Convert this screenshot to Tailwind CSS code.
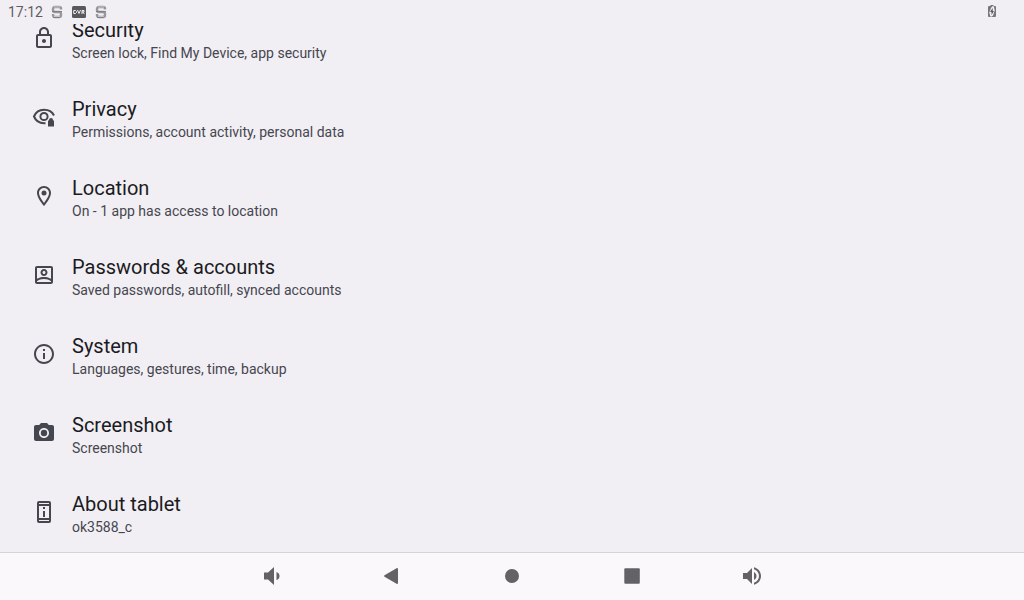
<!DOCTYPE html>
<html lang="en">
<head>
<meta charset="utf-8">
<meta name="viewport" content="width=device-width, initial-scale=1">
<title>Settings</title>
<script src="https://cdn.jsdelivr.net/npm/@tailwindcss/browser@4"></script>
</head>
<body class="flex h-screen flex-col overflow-hidden bg-[#f1eff4] font-[Roboto,sans-serif] text-[#1b1b1f]">
  <header class="flex h-6 shrink-0 items-center justify-between pl-2 pr-6 text-[#5f5e62]">
    <div class="flex items-center">
      <time class="w-9 text-sm leading-6">17:12</time>
      <svg class="ml-1 size-4.5" viewBox="0 0 18 18" fill="none" stroke="#98979c" aria-hidden="true"><path stroke-width="2.400" d="M13 6.500V5.500Q13 4 11 4H7Q5 4 5 6V7Q5 9 7 9H11Q13 9 13 11V12Q13 14 11 14H7Q5 14 5 12V11"/><path stroke="#807f84" stroke-width="1" d="M4 8.500H14M5 14.500H12"/><path stroke="#d0ced4" stroke-width=".8" d="M6 4H12M6 13.500H12"/></svg>
      <svg class="ml-1 size-4.5" viewBox="0 0 18 18" aria-hidden="true"><rect x="2" y="3" width="14" height="12" rx="1.500" fill="#59585c"/><path fill="none" stroke="#efedf2" stroke-width="1" d="M3.700 7.500V10.500H5.500L6.500 9.500V8.500L5.500 7.500ZM7.500 7L9 10.500L10.500 7M12 11V7.500H14V9H12M13 9L14.300 11"/></svg>
      <svg class="ml-1 size-4.5" viewBox="0 0 18 18" fill="none" stroke="#98979c" aria-hidden="true"><path stroke-width="2.400" d="M13 6.500V5.500Q13 4 11 4H7Q5 4 5 6V7Q5 9 7 9H11Q13 9 13 11V12Q13 14 11 14H7Q5 14 5 12V11"/><path stroke="#807f84" stroke-width="1" d="M4 8.500H14M5 14.500H12"/><path stroke="#d0ced4" stroke-width=".8" d="M6 4H12M6 13.500H12"/></svg>
    </div>
    <svg class="size-4" viewBox="0 0 16 16" role="img" aria-label="Battery charging"><path fill="#77767a" d="M6.500 1H9.500V2H11Q12 2 12 3V12Q12 13 11 13H5Q4 13 4 12V3Q4 2 5 2H6.500Z"/><path fill="#f1eff4" d="M8.300 2.300H9.800L10.700 6.500L9 11.500L7.800 12.600H6.300L5.300 8.500L7 4Z"/><path fill="#59585c" d="M8.700 4L6 8H7.500V11L10 7H8.700Z"/></svg>
  </header>

  <main class="flex min-h-0 flex-1 flex-col justify-end overflow-hidden">
    <a href="#security" class="flex shrink-0 items-center gap-4 px-8 pt-[18px] pb-[15px]">
      <svg class="mb-[5px] size-6 shrink-0 fill-[#46464f]" viewBox="0 0 24 24" aria-hidden="true"><path d="M18 8h-1V6c0-2.760-2.240-5-5-5S7 3.240 7 6v2H6c-1.100 0-2 .9-2 2v10c0 1.100.9 2 2 2h12c1.100 0 2-.9 2-2V10c0-1.100-.9-2-2-2zM9 6c0-1.660 1.340-3 3-3s3 1.340 3 3v2H9V6zm9 14H6V10h12v10zm-6-3c1.100 0 2-.9 2-2s-.9-2-2-2-2 .9-2 2 .9 2 2 2z"/></svg>
      <span class="flex flex-col"><span class="text-xl leading-[26px]">Security</span><span class="text-sm leading-5 text-[#46464f]">Screen lock, Find My Device, app security</span></span>
    </a>
    <a href="#privacy" class="flex shrink-0 items-center gap-4 px-8 pt-[18px] pb-[15px]">
      <svg class="mb-[5px] size-6 shrink-0" viewBox="0 0 24 24" fill="none" stroke="#46464f" stroke-width="2" aria-hidden="true"><path d="M22 10.500C20.200 6.800 16.400 4.800 12 4.800C7.500 4.800 3.700 7.400 2 11.500C3.700 15.600 7.500 18.200 12 18.200H13.500"/><circle cx="12" cy="11.500" r="3.600"/><path fill="#46464f" stroke="none" d="M16 21.500V15.500H17V15Q17 13 19 13T21 15V15.500H22V21.500Z"/></svg>
      <span class="flex flex-col"><span class="text-xl leading-[26px]">Privacy</span><span class="text-sm leading-5 text-[#46464f]">Permissions, account activity, personal data</span></span>
    </a>
    <a href="#location" class="flex shrink-0 items-center gap-4 px-8 pt-[18px] pb-[15px]">
      <svg class="mb-[5px] size-6 shrink-0 fill-[#46464f]" viewBox="0 0 24 24" aria-hidden="true"><path d="M12 2C8.130 2 5 5.130 5 9c0 5.250 7 13 7 13s7-7.750 7-13c0-3.870-3.130-7-7-7zM7 9c0-2.760 2.240-5 5-5s5 2.240 5 5c0 2.880-2.880 7.190-5 9.880C9.920 16.210 7 11.850 7 9z"/><circle cx="12" cy="9" r="2.500"/></svg>
      <span class="flex flex-col"><span class="text-xl leading-[26px]">Location</span><span class="text-sm leading-5 text-[#46464f]">On - 1 app has access to location</span></span>
    </a>
    <a href="#accounts" class="flex shrink-0 items-center gap-4 px-8 pt-[18px] pb-[15px]">
      <svg class="mb-[5px] size-6 shrink-0 fill-[#46464f]" viewBox="0 0 24 24" aria-hidden="true"><path d="M19 3H5c-1.100 0-2 .9-2 2v14c0 1.100.9 2 2 2h14c1.100 0 2-.9 2-2V5c0-1.100-.9-2-2-2zm0 2v10.790C16.520 14.370 14.040 14 12 14s-4.520.370-7 1.790V5h14zM5 19v-.770C6.740 16.660 9.310 16 12 16s5.260.660 7 2.230V19H5zm7-6c1.940 0 3.500-1.560 3.500-3.500S13.940 6 12 6 8.500 7.560 8.500 9.500 10.060 13 12 13zm0-5c.830 0 1.500.670 1.500 1.500S12.830 11 12 11s-1.500-.670-1.500-1.500S11.170 8 12 8z"/></svg>
      <span class="flex flex-col"><span class="text-xl leading-[26px]">Passwords &amp; accounts</span><span class="text-sm leading-5 text-[#46464f]">Saved passwords, autofill, synced accounts</span></span>
    </a>
    <a href="#system" class="flex shrink-0 items-center gap-4 px-8 pt-[18px] pb-[15px]">
      <svg class="mb-[5px] size-6 shrink-0 fill-[#46464f]" viewBox="0 0 24 24" aria-hidden="true"><path d="M11 7h2v2h-2zm0 4h2v6h-2zm1-9C6.480 2 2 6.480 2 12s4.480 10 10 10 10-4.480 10-10S17.520 2 12 2zm0 18c-4.410 0-8-3.590-8-8s3.590-8 8-8 8 3.590 8 8-3.590 8-8 8z"/></svg>
      <span class="flex flex-col"><span class="text-xl leading-[26px]">System</span><span class="text-sm leading-5 text-[#46464f]">Languages, gestures, time, backup</span></span>
    </a>
    <a href="#screenshot" class="flex shrink-0 items-center gap-4 px-8 pt-[18px] pb-[15px]">
      <svg class="mb-[5px] size-6 shrink-0 fill-[#46464f]" viewBox="0 0 24 24" aria-hidden="true"><circle cx="12" cy="12" r="3.200"/><path d="M9 2L7.170 4H4c-1.100 0-2 .9-2 2v12c0 1.100.9 2 2 2h16c1.100 0 2-.9 2-2V6c0-1.100-.9-2-2-2h-3.170L15 2H9zm3 15c-2.760 0-5-2.240-5-5s2.240-5 5-5 5 2.240 5 5-2.240 5-5 5z"/></svg>
      <span class="flex flex-col"><span class="text-xl leading-[26px]">Screenshot</span><span class="text-sm leading-5 text-[#46464f]">Screenshot</span></span>
    </a>
    <a href="#about" class="flex shrink-0 items-center gap-4 px-8 pt-[18px] pb-[15px]">
      <svg class="mb-[5px] size-6 shrink-0 fill-[#46464f]" viewBox="0 0 24 24" aria-hidden="true"><path fill-rule="evenodd" d="M7 1H17Q19 1 19 3V21Q19 23 17 23H7Q5 23 5 21V3Q5 1 7 1ZM7 3V4H17V3ZM7 6V18H17V6ZM7 20V21H17V20ZM11 7H13V9H11ZM11 11H13V17H11Z"/></svg>
      <span class="flex flex-col"><span class="text-xl leading-[26px]">About tablet</span><span class="text-sm leading-5 text-[#46464f]">ok3588_c</span></span>
    </a>
  </main>

  <nav aria-label="System navigation" class="flex h-12 shrink-0 justify-center border-t border-[#d5d3da] bg-[#faf8fb] pb-px">
    <button type="button" aria-label="Volume down" class="flex w-30 items-center justify-center"><svg class="size-6 fill-[#636266]" viewBox="0 0 24 24"><path d="M4 8.500H8L14 3V21L8 15.500H4ZM16.500 8Q19.500 9 19.500 12T16.500 16Z"/></svg></button>
    <button type="button" aria-label="Back" class="flex w-30 items-center justify-center"><svg class="size-6 fill-[#636266]" viewBox="0 0 24 24"><path d="M17 4Q18 4 18 5V19Q18 20 17 20L4.500 12.800Q3.500 12 4.500 11.200Z"/></svg></button>
    <button type="button" aria-label="Home" class="flex w-30 items-center justify-center"><svg class="size-6 fill-[#636266]" viewBox="0 0 24 24"><circle cx="12" cy="12" r="7"/></svg></button>
    <button type="button" aria-label="Recent apps" class="flex w-30 items-center justify-center"><svg class="size-6 fill-[#636266]" viewBox="0 0 24 24"><rect x="4.300" y="4.300" width="15.500" height="15.500" rx="1"/></svg></button>
    <button type="button" aria-label="Volume up" class="flex w-30 items-center justify-center"><svg class="size-6 fill-[#636266]" viewBox="0 0 24 24"><path d="M3 9v6h4l5 5V4L7 9H3zm13.500 3c0-1.770-1.020-3.290-2.500-4.030v8.050c1.480-.730 2.500-2.250 2.500-4.020zM14 3.230v2.060c2.890.860 5 3.540 5 6.710s-2.110 5.850-5 6.710v2.060c4.010-.910 7-4.490 7-8.770s-2.990-7.860-7-8.770z"/></svg></button>
  </nav>
</body>
</html>
